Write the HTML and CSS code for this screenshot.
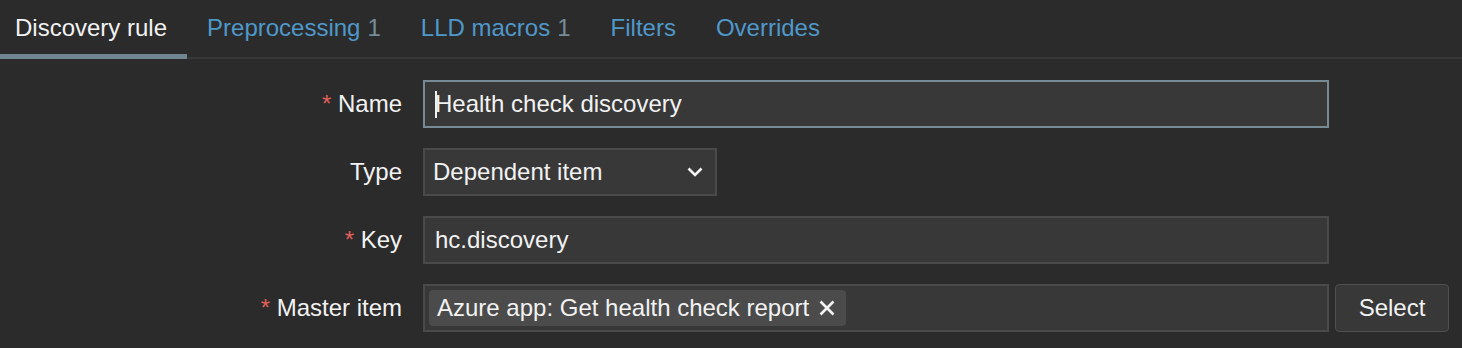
FILE: index.html
```html
<!DOCTYPE html>
<html lang="en">
<head>
    <meta charset="UTF-8">
    <title>Discovery rule</title>
    <link rel="stylesheet" href="styles.css">
</head>
<body>
    <div class="tabs">
        <a class="tab active">Discovery rule</a>
        <a class="tab">Preprocessing<span class="count">1</span></a>
        <a class="tab">LLD macros<span class="count">1</span></a>
        <a class="tab">Filters</a>
        <a class="tab">Overrides</a>
    </div>

    <div class="form">
        <label class="label required">Name</label>
        <div class="field wide focused"><span class="caret"></span>Health check discovery</div>

        <label class="label">Type</label>
        <div class="field select">
            <span>Dependent item</span>
            <svg class="chevron" width="16" height="10" viewBox="0 0 16 10">
                <path d="M1.5 1.5 L8 8 L14.5 1.5" fill="none" stroke="#f2f2f2" stroke-width="2.6"/>
            </svg>
        </div>

        <label class="label required">Key</label>
        <div class="field wide">hc.discovery</div>

        <label class="label required">Master item</label>
        <div class="master-row">
            <div class="field wide multiselect">
                <span class="chip">Azure app: Get health check report
                    <svg class="chip-close" width="16" height="16" viewBox="0 0 16 16">
                        <path d="M1.5 1.5 L14.5 14.5 M14.5 1.5 L1.5 14.5" stroke="#f2f2f2" stroke-width="2.6"/>
                    </svg>
                </span>
            </div>
            <button class="button">Select</button>
        </div>
    </div>
</body>
</html>
```

FILE: styles.css
```css
body {
    margin: 0;
    background-color: #2b2b2b;
    color: #f2f2f2;
    font-family: "Liberation Sans", Arial, sans-serif;
    font-size: 24px;
}
.tabs {
    display: flex;
    border-bottom: 2px solid #383838;
    padding-left: 0;
}
.tab {
    padding: 0 20px;
    height: 57px;
    line-height: 55px;
    color: #4f98ca;
    white-space: nowrap;
    cursor: pointer;
}
.tab:first-child {
    margin-left: -5px;
}
.tab.active {
    color: #f2f2f2;
    height: 54px;
    border-bottom: 5px solid #6f858f;
    margin-bottom: -2px;
}
.count {
    color: #768d99;
    margin-left: 7px;
}
.form {
    display: grid;
    grid-template-columns: 402px auto;
    column-gap: 21px;
    row-gap: 20px;
    margin-top: 21px;
    justify-items: start;
}
.label {
    justify-self: end;
    align-self: center;
}
.required::before {
    content: "* ";
    color: #e0605a;
}
.field {
    box-sizing: border-box;
    height: 48px;
    border: 2px solid #4a4a4a;
    background-color: #383838;
    padding: 0 10px;
    display: flex;
    align-items: center;
    white-space: nowrap;
}
.wide {
    width: 906px;
}
.focused {
    border-color: #768a96;
}
.caret {
    width: 2px;
    height: 27px;
    background-color: #f2f2f2;
    margin-right: -2px;
}
.select {
    width: 294px;
    justify-content: space-between;
    padding: 0 12px 0 8px;
}
.multiselect {
    padding: 0 4px;
}
.chip {
    display: flex;
    align-items: center;
    gap: 10px;
    height: 36px;
    padding: 0 11px 0 8px;
    background-color: #4b4b4b;
    border-radius: 4px;
}
.chip-close {
    flex-shrink: 0;
}
.master-row {
    display: flex;
    gap: 6px;
}
.button {
    box-sizing: border-box;
    width: 114px;
    height: 48px;
    background-color: #383838;
    border: 1px solid #4f4f4f;
    border-radius: 4px;
    color: #f2f2f2;
    font-family: inherit;
    font-size: 24px;
    cursor: pointer;
}
```
